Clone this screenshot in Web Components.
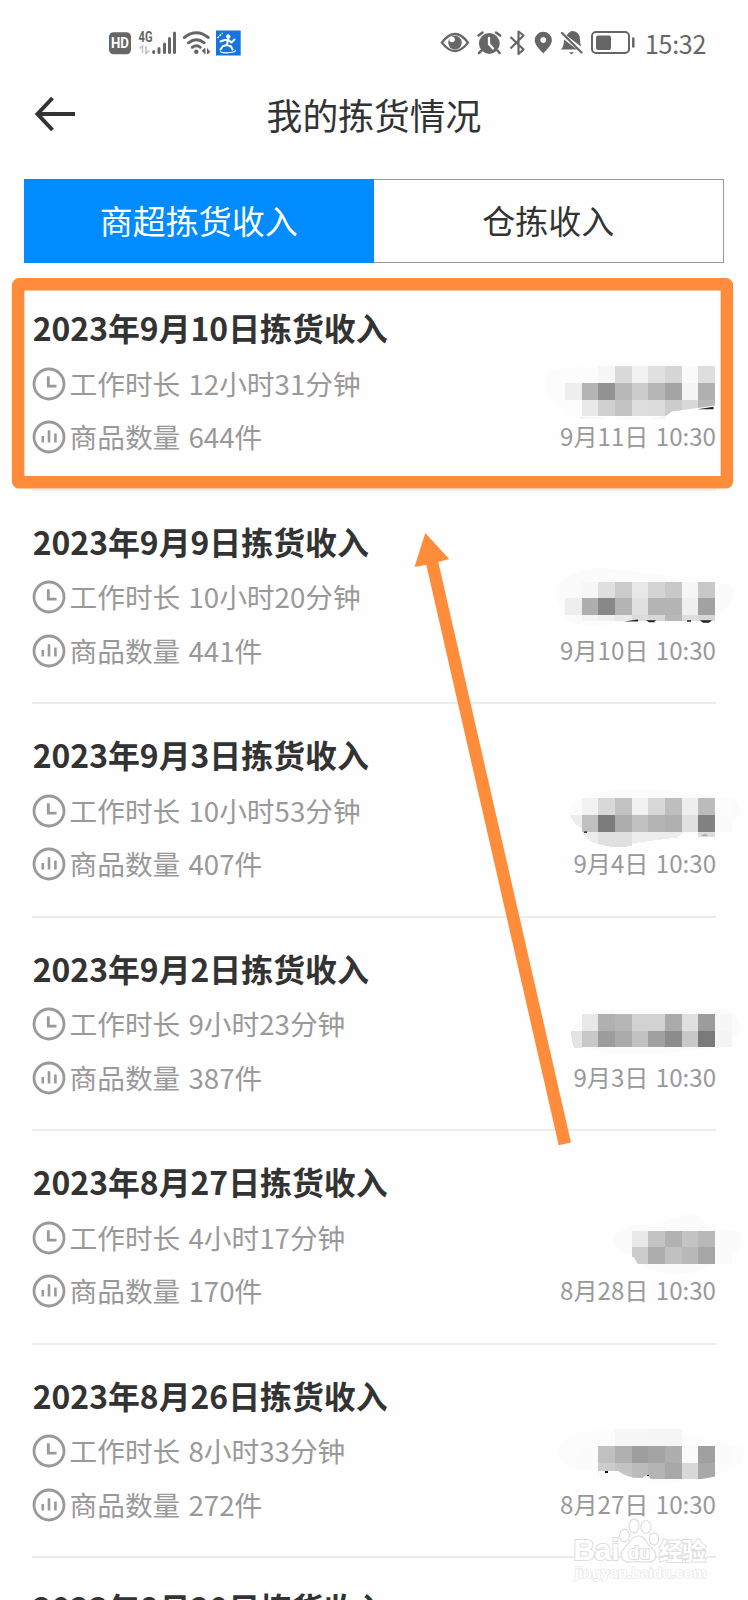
<!DOCTYPE html>
<html lang="zh-CN">
<head>
<meta charset="utf-8">
<title>我的拣货情况</title>
<style>
  html, body {
    margin: 0;
    height: 1600px;
    overflow: hidden;
    background: #fefefe;
  }
  body {
    font-family: "Noto Sans CJK SC", sans-serif;
    color: #333;
  }
</style>
</head>
<body>
<picking-app></picking-app>

<script>
// small helper, every element here is just markup + styles in an open root
function attach(el, html) {
  el.attachShadow({ mode: "open" }).innerHTML = html;
}

class StatusBar extends HTMLElement {
  constructor() {
    super();
    attach(this, `
      <style>
        :host { display: flex; justify-content: space-between; height: 86px; box-sizing: border-box; padding: 24px 42px 24px 104px; color: #666; }
        svg { display: block; }
        .right { display: flex; align-items: center; gap: 9px; }
        .time { font-size: 25px; line-height: 38px; width: 61px; white-space: nowrap; letter-spacing: -.3px; }
      </style>
      <svg width="144" height="38" viewBox="104 24 144 38">
        <rect x="109" y="32.300" width="22" height="22" rx="4.500" fill="#666"/>
        <text x="120" y="48.300" text-anchor="middle" font-family="Roboto, sans-serif" font-weight="700" font-size="14" textLength="18" lengthAdjust="spacingAndGlyphs" fill="#fff">HD</text>
        <text x="138.500" y="41.700" font-family="Roboto, sans-serif" font-weight="700" font-size="14.500" textLength="14" lengthAdjust="spacingAndGlyphs" fill="#666">4G</text>
        <path d="M139.500 48.500l3-2.500v7.500M146 46v7.500l3.500-3" fill="none" stroke="#c4c4c4" stroke-width="1.600"/>
        <path d="M153.700 51.500v1M159 48.500v4M164.500 44v8.500M169.500 38.500v14M174.500 33v19.500" stroke="#666" stroke-width="3" stroke-linecap="round"/>
        <g fill="none" stroke="#666" stroke-width="2.900" stroke-linecap="round">
          <path d="M184.300 37.500q12.200-9.500 24 0M188.400 42.800q8.100-6 15.800 0M192.300 47.300q4.300-3 8 0"/>
        </g>
        <circle cx="196.300" cy="51.700" r="2.200" fill="#666"/>
        <path d="M202 51l3-2.500v5.500M207.500 48.500v5.500l2.500-2.500" fill="#666" stroke="#666"/>
        <rect x="216" y="30.500" width="24.700" height="25" fill="#1474e0"/>
        <path d="M217.500 38l5-5" stroke="#fff" stroke-width="1.500" stroke-dasharray="2 1"/>
        <circle cx="228.300" cy="36.500" r="2.200" fill="#fff"/>
        <path d="M228 39l-1 6M220.500 41.500l4-1.500h4l3 2.500 3-3M227 45l-4 1-2.500 3.500M227 45l4 1.500 1.500 3" fill="none" stroke="#fff" stroke-width="2" stroke-linecap="round" stroke-linejoin="round"/>
        <path d="M221 51q-2 1.500 5 1.800 10 0 9.500-3" fill="none" stroke="#fff" stroke-width="1.200"/>
      </svg>
      <div class="right">
        <svg width="196" height="38" viewBox="440 24 196 38">
          <path d="M441.800 42.600q13.300-17.200 26.200 0-12.900 16.800-26.200 0z" fill="none" stroke="#666" stroke-width="2.300"/>
          <circle cx="455" cy="42.600" r="6.800" fill="#666"/>
          <circle cx="452" cy="39.500" r="2.800" fill="#fefefe"/>
          <circle cx="489.300" cy="43.500" r="10.400" fill="#666"/>
          <path d="M478.500 35.500l4-3M500 35.500l-4-3M481.500 50.500l-2.500 2.500M497.500 50.500l2 2.500" stroke="#666" stroke-width="2.500" stroke-linecap="round"/>
          <path d="M489 38v6l4 4.500" fill="none" stroke="#fefefe" stroke-width="2.300" stroke-linecap="round"/>
          <path d="M510.500 37l13 12.500-5 4.500V31.500l5 4-13 13" fill="none" stroke="#666" stroke-width="2.200" stroke-linejoin="round"/>
          <path fill-rule="evenodd" d="M543.300 53.500c-4-4.500-8.600-8.500-8.600-13.500a8.600 8.300 0 0 1 17.200 0c0 5-4.600 9-8.600 13.500zm0-16.500a3 3 0 1 0 .01 0z" fill="#666"/>
          <path d="M561 49.500q3-3 3-10l13 10zM566.500 35.500q2-3.500 5-4.500 8 0 8.500 8 0 5 1 7.500z" fill="#666"/>
          <path d="M562 33l19.500 19.500" stroke="#666" stroke-width="2.200" stroke-linecap="round"/>
          <path d="M569 52.300h5l-2.500 2.200z" fill="#666"/>
          <rect x="592" y="32" width="37" height="21" rx="4" fill="none" stroke="#666" stroke-width="2"/>
          <rect x="596" y="35.500" width="15" height="14.500" rx="2" fill="#666"/>
          <path d="M633.300 38.500v8" stroke="#666" stroke-width="2.500" stroke-linecap="round"/>
        </svg>
        <span class="time">15:32</span>
      </div>`);
  }
}

class PageHeader extends HTMLElement {
  constructor() {
    super();
    attach(this, `
      <style>
        :host { display: grid; grid-template-columns: 76px 1fr 76px; align-items: center; height: 56px; padding-bottom: 37px; }
        svg { display: block; margin: 0 0 0 34px; }
        h1 { margin: 0; font-size: 35.800px; font-weight: 400; line-height: 56px; text-align: center; }
      </style>
      <svg width="42" height="36" viewBox="0 0 42 36" fill="none" stroke="#333" stroke-width="4">
        <path d="M18.500 2L3.500 18l15 16M3 18h38"/>
      </svg>
      <h1><slot></slot></h1>`);
  }
}

class TabBar extends HTMLElement {
  constructor() {
    super();
    attach(this, `
      <style>
        :host { display: flex; box-sizing: border-box; height: 84px; margin: 0 24px; border: 1px solid #999; border-left: 0; }
        ::slotted(*) { flex: 1; text-align: center; font-size: 33px; line-height: 80px; }
        ::slotted([active]) { margin: -1px 0; line-height: 82px; background: #008cff; color: #fff; }
      </style>
      <slot></slot>`);
  }
}

// Censored amount. "tiles" holds rows of grey levels, "y" is where the
// first row starts, each tile is a sixth of 100px
const TILE = 50 / 3;

class PixelMask extends HTMLElement {
  constructor() {
    super();
    this.attachShadow({ mode: "open" });
  }
  set mask(m) {
    let rects = "";
    m.tiles.forEach((line, r) => {
      const h = m.heights ? m.heights[r] : TILE;
      line.split(" ").forEach((v, c) => {
        if (v === "..") return;
        rects += `<rect x="${(25 + c * TILE).toFixed(2)}" y="${(m.y + r * TILE).toFixed(2)}" width="${TILE.toFixed(2)}" height="${h}" fill="#${v + v + v}"/>`;
      });
    });
    this.shadowRoot.innerHTML = `
      <style>
        :host { display: block; height: 53.500px; }
        svg { display: block; overflow: visible; }
      </style>
      <svg width="208" height="53.500" viewBox="0 0 208 53.500" shape-rendering="crispEdges">
        ${m.under || ""}${rects}<g shape-rendering="auto">${m.over || ""}</g>
      </svg>`;
  }
}

class MetaLine extends HTMLElement {
  constructor() {
    super();
    const icon = this.getAttribute("icon") === "clock"
      ? `<path d="M16.300 9.300v9.800h8.200"/>`
      : `<path d="M10.800 16v6.600M17 10.300v12.300M23.400 13.600v9" stroke-width="2.600"/>`;
    attach(this, `
      <style>
        :host { display: flex; align-items: center; gap: 3.500px; height: 53.500px; font-size: 27.700px; color: #999; word-spacing: 2px; white-space: nowrap; }
        svg { display: block; flex: none; margin-top: 1px; }
        span { margin-top: -1.500px; }
      </style>
      <svg width="34" height="34" viewBox="0 0 34 34" fill="none" stroke="#999" stroke-width="2.800">
        <circle cx="17" cy="17" r="15"/>${icon}
      </svg>
      <span><slot></slot></span>`);
  }
}

class IncomeRow extends HTMLElement {
  set data(d) {
    attach(this, `
      <style>
        :host { display: block; box-sizing: border-box; height: 213.500px; padding-top: 30px; border-bottom: 2px solid #ececec; }
        h2 { margin: 0 0 9.500px .7px; font-size: 31.900px; line-height: 40px; font-weight: 700; white-space: nowrap; }
        .body { display: grid; grid-template-columns: 1fr 176px; }
        time { display: block; height: 53.500px; line-height: 51px; font-size: 24.100px; color: #999; text-align: right; white-space: nowrap; word-spacing: 2px; margin-left: -4px; }
      </style>
      <h2>${d.day}拣货收入</h2>
      <div class="body">
        <div>
          <meta-line icon="clock">工作时长 ${d.hours}</meta-line>
          <meta-line icon="bars">商品数量 ${d.count}件</meta-line>
        </div>
        <div>
          <pixel-mask></pixel-mask>
          <time>${d.paid} 10:30</time>
        </div>
      </div>`);
    if (d.mask) this.shadowRoot.querySelector("pixel-mask").mask = d.mask;
  }
}

// bottom edge of the screen cuts through the title, nothing below it shows
class IncomePeek extends HTMLElement {
  constructor() {
    super();
    attach(this, `
      <style>
        :host { display: block; padding-top: 29px; }
        h2 { margin: 0 0 0 .7px; font-size: 31.900px; line-height: 40px; font-weight: 700; white-space: nowrap; }
      </style>
      <h2><slot></slot></h2>`);
  }
}

// highlight box and arrow drawn over the list
class MarkerLayer extends HTMLElement {
  constructor() {
    super();
    attach(this, `
      <style>
        :host { position: absolute; left: 0; top: 0; pointer-events: none; }
        svg { display: block; }
      </style>
      <svg width="748" height="1600" viewBox="0 0 748 1600" fill="#ff8c3b">
        <path d="M32 489.500H716" stroke="#fdeee2" stroke-width="2"/>
        <rect x="18.100" y="284.300" width="708.800" height="198" rx="1" fill="none" stroke="#ff8c3b" stroke-width="12.500" stroke-linejoin="round"/>
        <path d="M425.300 533L449.200 559 438.300 562 571 1142.500 558.700 1145.300 426.300 564.700 414.500 567z"/>
      </svg>`);
  }
}

class SiteWatermark extends HTMLElement {
  constructor() {
    super();
    attach(this, `
      <style>
        :host { position: absolute; left: 566px; top: 1512px; }
        svg { display: block; }
        text { font-family: "Liberation Sans", "Noto Sans CJK SC", sans-serif; font-weight: 700; paint-order: stroke; }
      </style>
      <svg width="150" height="80" viewBox="566 1512 150 80" fill="#fff" stroke="#dedede" stroke-width="1.200">
        <text x="573.500" y="1560" font-size="29" textLength="46" lengthAdjust="spacingAndGlyphs" stroke-width="2">Bai</text>
        <ellipse cx="624.500" cy="1535.500" rx="5" ry="6.300"/>
        <ellipse cx="634" cy="1526" rx="5" ry="6.800"/>
        <ellipse cx="646" cy="1527" rx="5" ry="6.500"/>
        <ellipse cx="654" cy="1539" rx="4.700" ry="6.200"/>
        <path d="M638.500 1536c7 0 8 8 13 12 7 6 5 14-3 14-5 0-14-1-18 0-8 1-13-7-6-14 5-5 7-12 14-12z"/>
        <text x="628" y="1558.500" font-size="19" textLength="22" lengthAdjust="spacingAndGlyphs" stroke-width="2">du</text>
        <text x="659" y="1559.500" font-size="24" textLength="47" style="font-family:'Noto Sans CJK SC',sans-serif" stroke-width="2">经验</text>
        <text x="574.500" y="1578" font-size="15.500" textLength="132" lengthAdjust="spacingAndGlyphs" stroke="#e4e4e4">jingyan.baidu.com</text>
      </svg>`);
  }
}

const rows = [
  { day: "2023年9月10日", hours: "12小时31分钟", count: 644, paid: "9月11日", mask: {
    y: 9.2,
    tiles: [".. .. f6 da f2 e0 d6 fa de", "ee b4 92 b8 cb b5 a4 f4 b0", "fd e9 d0 c4 dd dc cc d8 b8"],
    under: `<path d="M5 15q30-8 53-3v40q-45 5-53-20z" fill="#fcfcfc"/>`,
    over: `<path d="M40 59.500q60 5 85 0v2H40z" fill="#f0f0f0"/><path d="M125 59.500l7-5 43.500-6v12z" fill="#fefefe"/><path d="M157.500 52.300l16-2.500v2.500z" fill="#222"/>`
  } },
  { day: "2023年9月9日", hours: "10小时20分钟", count: 441, paid: "9月10日", mask: {
    y: 11.7, heights: [TILE, TILE, 6],
    tiles: ["fb f7 df cb e8 d4 c8 f6 c8", "ee ae 88 b4 e0 b4 b4 ef a2", ".. f4 f0 e8 dc d8 b8 dd d6"],
    under: `<path d="M18 14Q45-8 75 0l50 5q15 2 16 12l48-3q12 12-6 28H140L62 55Q25 58 22 40 14 25 18 14z" fill="#fbfbfb"/>`,
    over: `<path d="M84 51.500l14-2v2zM106 50.300h10l-2 2h-5zM147 50.300h4v1.500h-4zM160 50.300h12l-3 2.500h-6z" fill="#222"/>`
  } },
  { day: "2023年9月3日", hours: "10小时53分钟", count: 407, paid: "9月4日", mask: {
    y: 14.2, heights: [TILE, TILE, 5],
    tiles: [".. f2 d8 c3 f2 d8 be ee bb fc", ".. c0 7c ad c0 b4 b0 e0 82 fa", ".. .. .. .. .. .. .. .. dd"],
    under: `<path d="M31 20Q50 8 90 5l50 3 55 7q13 12-5 25l-50 12-55 10Q50 65 30 31z" fill="#fbfbfb"/><path d="M30 31h12v13q-8-3-12-13zM42 47.500h103l-8 6-55 7Q52 66 42 47.500z" fill="#ededed"/><path d="M58 47h33.500v15q-22 3-33.500-3z" fill="#e0e0e0"/>`,
    over: `<path d="M44 47.500h3v1.300h-3z" fill="#111"/><path d="M161 51.500q5-2 7 0z" fill="#777"/>`
  } },
  { day: "2023年9月2日", hours: "9小时23分钟", count: 387, paid: "9月3日", mask: {
    y: 17,
    tiles: [".. e8 b0 b6 d2 d2 aa e0 9c f7", ".. c8 9c aa c2 a0 8c c8 7a f4"],
    under: `<path d="M31 34Q42 10 90 13l95-1q32 16-1 38l-60 6Q30 62 31 34z" fill="#fbfbfb"/><path d="M31 34h11v16.500h-8q-3-7-3-16.500z" fill="#e4e4e4"/>`
  } },
  { day: "2023年8月27日", hours: "4小时17分钟", count: 170, paid: "8月28日", mask: {
    y: 19.5,
    tiles: [".. .. .. .. e8 c3 b2 c4 b8 fb", ".. .. .. .. cc ae c0 b9 a6 fb"],
    under: `<path d="M73 27q12-16 45-14 45-20 48 3l35 5q4 16-14 28l-35 13q-50 4-57-17-23-4-22-18z" fill="#fbfbfb"/>`,
    over: `<path d="M91.500 46.200h2.500l4 7h-6.500z" fill="#fbfbfb"/>`
  } },
  { day: "2023年8月26日", hours: "8小时33分钟", count: 272, paid: "8月27日", mask: {
    y: 5.3,
    tiles: [".. .. .. f6 f6 f5 f5 .. ..", ".. fb c0 b0 9e a4 ae fa a0 fb", ".. .. cc c4 bb b4 a8 d8 a8"],
    under: `<path d="M19 26Q22 7 60 7l80 1 35 9 29 7q2 20-20 23l-35 7q-35 12-45 0l-45-7Q17 47 19 26z" fill="#fcfcfc"/>`,
    over: `<path d="M58.300 47h20q10 8 24 7l5-3 4 4.500H58zM142 55.500h17l16.500-3v4H142z" fill="#fdfdfd"/><path d="M65 47h3v2h-3zM107 51h2v1h-2z" fill="#111"/>`
  } }
];

class PickingApp extends HTMLElement {
  constructor() {
    super();
    attach(this, `
      <style>
        :host { display: block; position: relative; width: 748px; height: 1600px; overflow: hidden; }
        main { padding: 14px 32px 0; }
      </style>
      <status-bar></status-bar>
      <page-header>我的拣货情况</page-header>
      <tab-bar><span active>商超拣货收入</span><span>仓拣收入</span></tab-bar>
      <main><income-peek>2023年8月20日拣货收入</income-peek></main>
      <marker-layer></marker-layer>
      <site-watermark></site-watermark>`);
    const main = this.shadowRoot.querySelector("main");
    const peek = main.querySelector("income-peek");
    rows.forEach((d) => {
      const row = document.createElement("income-row");
      row.data = d;
      main.insertBefore(row, peek);
    });
  }
}

customElements.define("status-bar", StatusBar);
customElements.define("page-header", PageHeader);
customElements.define("tab-bar", TabBar);
customElements.define("pixel-mask", PixelMask);
customElements.define("meta-line", MetaLine);
customElements.define("income-row", IncomeRow);
customElements.define("income-peek", IncomePeek);
customElements.define("marker-layer", MarkerLayer);
customElements.define("site-watermark", SiteWatermark);
customElements.define("picking-app", PickingApp);
</script>
</body>
</html>
